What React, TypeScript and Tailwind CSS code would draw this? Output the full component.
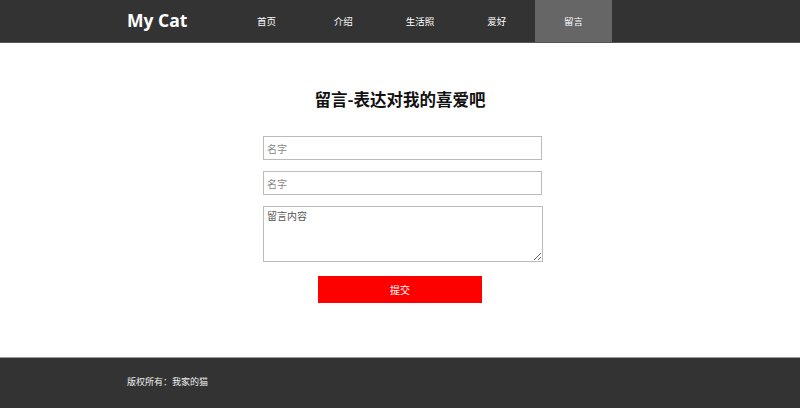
import React from 'react';

const navItems = ['首页', '介绍', '生活照', '爱好', '留言'];

export default function App() {
  return (
    <div className="w-[800px] h-[408px] bg-white flex flex-col" style={{ fontFamily: '"Noto Sans CJK SC", sans-serif' }}>
      <header className="h-[43px] bg-[#333] border-b border-[#555] shrink-0">
        <div className="w-[546px] mx-auto h-full flex items-center">
          <div className="w-[101px] text-white text-[17.5px] font-bold font-['Open_Sans','Noto_Sans_CJK_SC',sans-serif] leading-none pb-[1px]">
            My Cat
          </div>
          <nav className="grid grid-cols-5 w-[384px] h-full">
            {navItems.map((item) => (
              <a
                key={item}
                className={`flex items-center justify-center text-[9.5px] text-white ${item === '留言' ? 'bg-[#666]' : ''}`}
              >
                {item}
              </a>
            ))}
          </nav>
        </div>
      </header>

      <main className="h-[314px] shrink-0 pt-[44px]">
        <h2 className="text-center text-[16.5px] font-bold text-[#111] leading-[24px] mb-[25px]">留言-表达对我的喜爱吧</h2>
        <div className="w-[286px] mx-auto pl-[6px] flex flex-col gap-[11px]">
          <input
            className="w-[279px] h-[24px] border border-[#bbb] px-[3px] text-[10px] outline-none placeholder:text-[#888]"
            placeholder="名字"
          />
          <input
            className="w-[279px] h-[24px] border border-[#bbb] px-[3px] text-[10px] outline-none placeholder:text-[#888]"
            placeholder="名字"
          />
          <textarea
            className="w-[280px] h-[56px] border border-[#bbb] px-[3px] py-[1px] text-[10px] outline-none placeholder:text-[#555]"
            placeholder="留言内容"
          />
        </div>
        <div className="flex justify-center mt-[14px]">
          <button className="w-[164px] h-[27px] bg-[#ff0000] text-white text-[10px]">提交</button>
        </div>
      </main>

      <footer className="flex-1 bg-[#333] border-t border-[#999]">
        <div className="w-[546px] mx-auto pt-[17px] text-[9px] text-[#eee]">版权所有：我家的猫</div>
      </footer>
    </div>
  );
}
